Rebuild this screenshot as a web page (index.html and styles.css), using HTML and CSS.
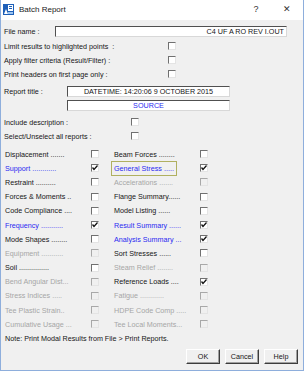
FILE: index.html
```html
<!DOCTYPE html>
<html lang="en">
<head>
    <meta charset="UTF-8">
    <title>Batch Report</title>
    <link rel="stylesheet" href="styles.css">
</head>
<body>
    <div class="window">
        <div class="titlebar">
            <svg class="app-icon" width="11" height="11" viewBox="0 0 11 11">
                <rect x="0" y="0" width="11" height="11" fill="#1d5fb8"/>
                <rect x="5" y="1" width="5" height="6" fill="#ffffff"/>
                <rect x="6" y="2" width="3" height="1" fill="#1d5fb8"/>
                <rect x="6" y="4" width="3" height="1" fill="#1d5fb8"/>
                <path d="M1 10 L3 5 L5 10 Z" fill="#ffffff"/>
                <rect x="5" y="8" width="5" height="2" fill="#9cc4f0"/>
            </svg>
            <span class="title">Batch Report</span>
            <span class="help-btn">?</span>
            <span class="close-btn">&#x2715;</span>
        </div>

        <div class="content">
            <div class="row file-row">
                <span class="label file-label">File name :</span>
                <div class="field file-field">C4 UF A RO REV I.OUT</div>
            </div>

            <div class="row opt-row">
                <span class="label opt-label">Limit results to highlighted points &nbsp;:</span>
                <span class="box"></span>
            </div>
            <div class="row opt-row">
                <span class="label opt-label">Apply filter criteria (Result/Filter) :</span>
                <span class="box"></span>
            </div>
            <div class="row opt-row">
                <span class="label opt-label">Print headers on first page only :</span>
                <span class="box"></span>
            </div>

            <div class="row title-row">
                <span class="label title-label">Report title :</span>
                <div class="field title-field">DATETIME: 14:20:06 9 OCTOBER 2015</div>
            </div>
            <div class="row source-row">
                <div class="field title-field blue">SOURCE</div>
            </div>

            <div class="row opt-row">
                <span class="label inc-label">Include description :</span>
                <span class="box"></span>
            </div>
            <div class="row opt-row">
                <span class="label inc-label">Select/Unselect all reports :</span>
                <span class="box"></span>
            </div>

            <div class="reports" id="reports"></div>

            <div class="row note-row">Note: Print Modal Results from File &gt; Print Reports.</div>

            <div class="buttons">
                <span class="btn">OK</span>
                <span class="btn">Cancel</span>
                <span class="btn">Help</span>
            </div>
        </div>
    </div>

    <script>
        // left label, state, right label, state  (state: "", "on", "blue-on", "off")
        const reports = [
            ["Displacement .......", "", "Beam Forces ........", ""],
            ["Support ............", "blue", "General Stress .....", "focus"],
            ["Restraint ..........", "", "Accelerations .......", "grey"],
            ["Forces & Moments ..", "", "Flange Summary......", ""],
            ["Code Compliance ....", "", "Model Listing ......", ""],
            ["Frequency ...........", "blue", "Result Summary ......", "blue"],
            ["Mode Shapes ........", "", "Analysis Summary ...", "blue"],
            ["Equipment ...........", "grey", "Sort Stresses ......", ""],
            ["Soil ...............", "", "Steam Relief ........", "grey"],
            ["Bend Angular Dist...", "grey", "Reference Loads ....", "checked"],
            ["Stress Indices .....", "grey", "Fatigue ............", "grey"],
            ["Tee Plastic Strain..", "grey", "HDPE Code Comp .....", "grey"],
            ["Cumulative Usage ...", "grey", "Tee Local Moments...", "grey"]
        ];

        const checkSvg = '<svg width="6" height="6" viewBox="0 0 6 6"><path d="M0.5 2.5 L2 4.5 L5.5 0.5" stroke="#111" stroke-width="1.3" fill="none"/></svg>';

        function makeCell(text, state) {
            const label = document.createElement("span");
            label.classList.add("rep-label");
            const inner = document.createElement("span");
            inner.textContent = text;
            label.appendChild(inner);
            const box = document.createElement("span");
            box.classList.add("box");
            if (state === "blue" || state === "focus") {
                label.classList.add("blue");
                box.innerHTML = checkSvg;
            }
            if (state === "focus") inner.classList.add("focus");
            if (state === "checked") box.innerHTML = checkSvg;
            if (state === "grey") {
                label.classList.add("grey");
                box.classList.add("disabled");
            }
            return [label, box];
        }

        const grid = document.getElementById("reports");
        reports.forEach(r => {
            makeCell(r[0], r[1]).forEach(el => grid.appendChild(el));
            makeCell(r[2], r[3]).forEach(el => grid.appendChild(el));
        });
    </script>
</body>
</html>
```

FILE: styles.css
```css
body {
    margin: 0;
    font-family: "Liberation Sans", Arial, sans-serif;
    font-size: 7.2px;
    color: #161616;
}
.window {
    width: 304px;
    height: 371px;
    box-sizing: border-box;
    border: 1px solid #8eaedc;
    border-top: none;
    background: #f0f0f0;
    display: flex;
    flex-direction: column;
}
.titlebar {
    height: 20px;
    background: #ffffff;
    display: flex;
    align-items: center;
    padding-left: 2px;
    padding-bottom: 2px;
    box-sizing: border-box;
}
.app-icon {
    margin-right: 5px;
}
.title {
    font-size: 8px;
    color: #1a1a1a;
    flex: 1;
}
.help-btn {
    font-size: 9px;
    width: 30px;
    text-align: center;
    color: #333;
}
.close-btn {
    font-size: 9px;
    width: 32px;
    text-align: center;
    color: #333;
}
.content {
    padding-left: 3px;
}
.row {
    display: flex;
    align-items: center;
}
.label {
    white-space: nowrap;
}
.file-row {
    margin-top: 6px;
    height: 11px;
}
.file-label {
    width: 51px;
}
.field {
    height: 11px;
    box-sizing: border-box;
    background: #ffffff;
    border-top: 1px solid #505050;
    border-left: 1px solid #505050;
    border-right: 1px solid #d8d8d8;
    border-bottom: 1px solid #d8d8d8;
    line-height: 9px;
    white-space: nowrap;
}
.file-field {
    width: 232px;
    text-align: right;
    padding-right: 2px;
}
.opt-row {
    height: 14px;
}
.opt-row:nth-of-type(2) {
    margin-top: 2px;
}
.opt-label {
    width: 164px;
}
.title-row {
    margin-top: 5px;
    height: 11px;
}
.title-label {
    width: 63px;
}
.title-field {
    width: 163px;
    text-align: center;
}
.source-row {
    margin-top: 3px;
    height: 11px;
    padding-left: 63px;
    margin-bottom: 4px;
}
.inc-label {
    width: 127px;
}
.box {
    display: inline-flex;
    align-items: center;
    justify-content: center;
    width: 8px;
    height: 8px;
    box-sizing: border-box;
    background: #ffffff;
    border-top: 1px solid #707070;
    border-left: 1px solid #707070;
    border-right: 1px solid #e4e4e4;
    border-bottom: 1px solid #e4e4e4;
}
.box.disabled {
    background: #f0f0f0;
    border-top-color: #a8a8a8;
    border-left-color: #a8a8a8;
}
.reports {
    margin-top: 4px;
    display: grid;
    grid-template-columns: 86px 23px 86px 8px;
    grid-auto-rows: 14.2px;
    align-items: center;
    padding-left: 1px;
}
.rep-label {
    white-space: nowrap;
}
.blue {
    color: #2a2af0;
}
.grey {
    color: #a6a6a6;
}
.focus {
    display: inline-block;
    border: 1px solid #b0b060;
    margin-left: -3px;
    padding: 2px 2px 2px 2px;
}
.note-row {
    height: 14px;
    padding-left: 1px;
}
.buttons {
    margin-top: 4px;
    display: flex;
    justify-content: flex-end;
    gap: 5px;
    padding-right: 5px;
}
.btn {
    width: 34px;
    height: 15px;
    box-sizing: border-box;
    display: flex;
    align-items: center;
    justify-content: center;
    background: #f0f0f0;
    border-top: 1px solid #ffffff;
    border-left: 1px solid #ffffff;
    border-right: 1px solid #3c3c3c;
    border-bottom: 1px solid #3c3c3c;
    box-shadow: inset -1px -1px 0 #a0a0a0;
}
```
